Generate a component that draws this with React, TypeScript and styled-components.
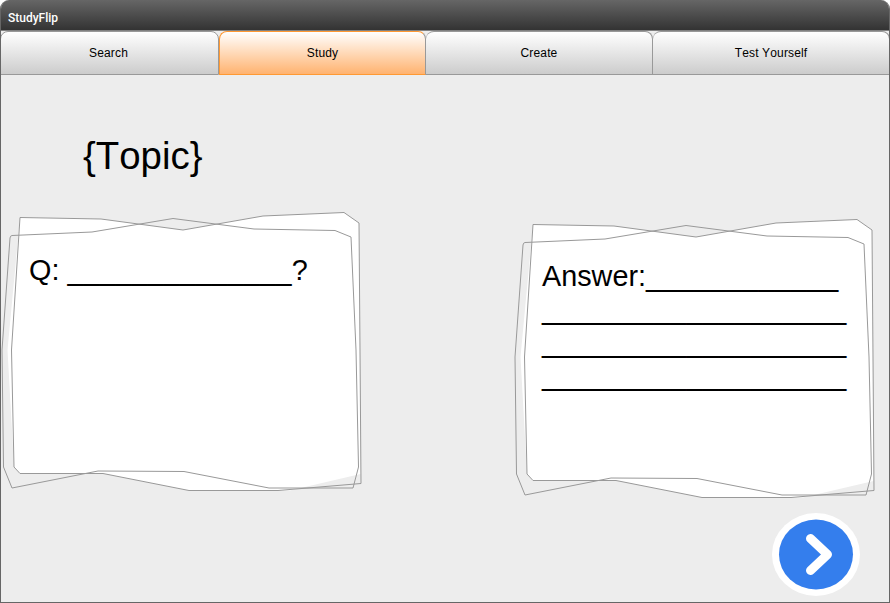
import React from "react";
import styled, { createGlobalStyle } from "styled-components";

const GlobalStyle = createGlobalStyle`
  *, *::before, *::after { box-sizing: border-box; }
  body { margin: 0; background: #fff; font-family: "Liberation Sans", Arial, sans-serif; font-kerning: none; }
`;

const Window = styled.div`
  display: flex;
  flex-direction: column;
  width: 890px;
  height: 603px;
  overflow: hidden;
  background: #ededed;
  border: 1px solid #666;
  border-top: 0;
  border-radius: 9px 9px 0 0;
`;

const TitleBar = styled.header`
  flex: none;
  height: 30px;
  margin: 0 -1px;
  padding: 0 8px;
  background: linear-gradient(#666, #333);
  color: #fff;
  font: 500 12px/36px Roboto, "Liberation Sans", sans-serif;
`;

const Tabs = styled.nav`
  flex: none;
  display: grid;
  grid-template-columns: 219px 207px 227px 237px;
  height: 45px;
  margin: 0 -1px;
  border-top: 1px solid #808080;
`;

const Tab = styled.button<{ $active?: boolean }>`
  height: 44px;
  margin: 0;
  padding: 0 0 1px;
  border: 1px solid ${(p) => (p.$active ? "#ff9933" : "#999")};
  border-left-width: ${(p) => (p.$active ? "1px" : "0")};
  border-right-color: #999;
  &:first-child { border-left-width: 1px; padding-right: 2px; }
  border-radius: 8px 8px 0 0;
  background: ${(p) => (p.$active ? "linear-gradient(#fff, #ffb370)" : "linear-gradient(#fff, #ccc)")};
  color: #000;
  font: 12px/14px "Liberation Sans", Arial, sans-serif;
  font-kerning: none;
  letter-spacing: 0.15px;
`;

const Content = styled.main`
  flex: 1;
  display: flex;
  flex-direction: column;
`;

const Topic = styled.h1`
  height: 44px;
  margin: 59px 0 0 82px;
  font-size: 38.4px;
  font-weight: 400;
  line-height: 44px;
`;

const Cards = styled.div`
  display: flex;
  justify-content: space-between;
  margin-top: 32px;
  padding-right: 13px;
  height: 305px;
`;

const Card = styled.section<{ $drop?: number; $inset: number }>`
  position: relative;
  flex: none;
  width: 362px;
  height: 282px;
  margin-top: ${(p) => p.$drop ?? 0}px;
  padding: ${(p) => p.$inset}px 0 0 28px;
`;

const Sheets = styled.svg<{ $left: number }>`
  position: absolute;
  left: ${(p) => p.$left}px;
  top: 0;
`;

const CardText = styled.p`
  position: relative;
  margin: 0;
  font-size: 28.8px;
  line-height: 33px;
  white-space: pre;
`;

const NextButton = styled.button`
  align-self: flex-end;
  width: 88px;
  height: 83px;
  margin: -2px 29px 0 0;
  padding: 0;
  border: 0;
  background: none;
`;

function Paper({ left = -1 }: { left?: number }) {
  const upper =
    "M20 7.5L101 9L183 20L263 6L344 2.5L359 13L360 140L361 273.5L278 280.5L189 280.5L103 263.5H20L14 257L11.5 140Z";
  const lower =
    "M12 25.5L92 22L173 8.5L254 19L335 20.5L351 27L356 140L358.5 257L353 278H269L184 261.5L98 261L12 278L3.5 257L2 140L10 28Q10.2 25.7 12 25.5Z";
  return (
    <Sheets $left={left} width="366" height="290" viewBox="0 0 366 290" fill="none">
      <path
        fill="#fff"
        d="M20 7.5L101 9L183 20L263 6L344 2.5L359 13L360.5 264L290 280.5H189L103 263.5H20L14 257L7.5 140Z"
      />
      <path d={upper} stroke="#999" />
      <path d={lower} stroke="#999" />
    </Sheets>
  );
}

const tabs = ["Search", "Study", "Create", "Test Yourself"];
const blank = (n: number) => "_".repeat(n);

export default function App() {
  return (
    <>
      <GlobalStyle />
      <Window>
        <TitleBar>StudyFlip</TitleBar>
        <Tabs>
          {tabs.map((t) => (
            <Tab key={t} $active={t === "Study"}>{t}</Tab>
          ))}
        </Tabs>
        <Content>
          <Topic>{"{Topic}"}</Topic>
          <Cards>
            <Card $inset={44}>
              <Paper />
              <CardText>Q: {blank(14)}?</CardText>
            </Card>
            <Card $drop={7} $inset={43}>
              <Paper left={-1.5} />
              <CardText>
                {["Answer:" + blank(12), blank(19), blank(19), blank(19)].join("\n")}
              </CardText>
            </Card>
          </Cards>
          <NextButton aria-label="Next">
            <svg width="88" height="83" viewBox="0 0 88 83" fill="none">
              <ellipse cx="44" cy="41.5" rx="44" ry="41.5" fill="#fff" />
              <ellipse cx="44" cy="41.5" rx="37" ry="35" fill="#347eed" />
              <path d="M38.5 25.5L55.5 41.5L38.5 57.5" stroke="#fff" strokeWidth="9" strokeLinecap="round" strokeLinejoin="round" />
            </svg>
          </NextButton>
        </Content>
      </Window>
    </>
  );
}
